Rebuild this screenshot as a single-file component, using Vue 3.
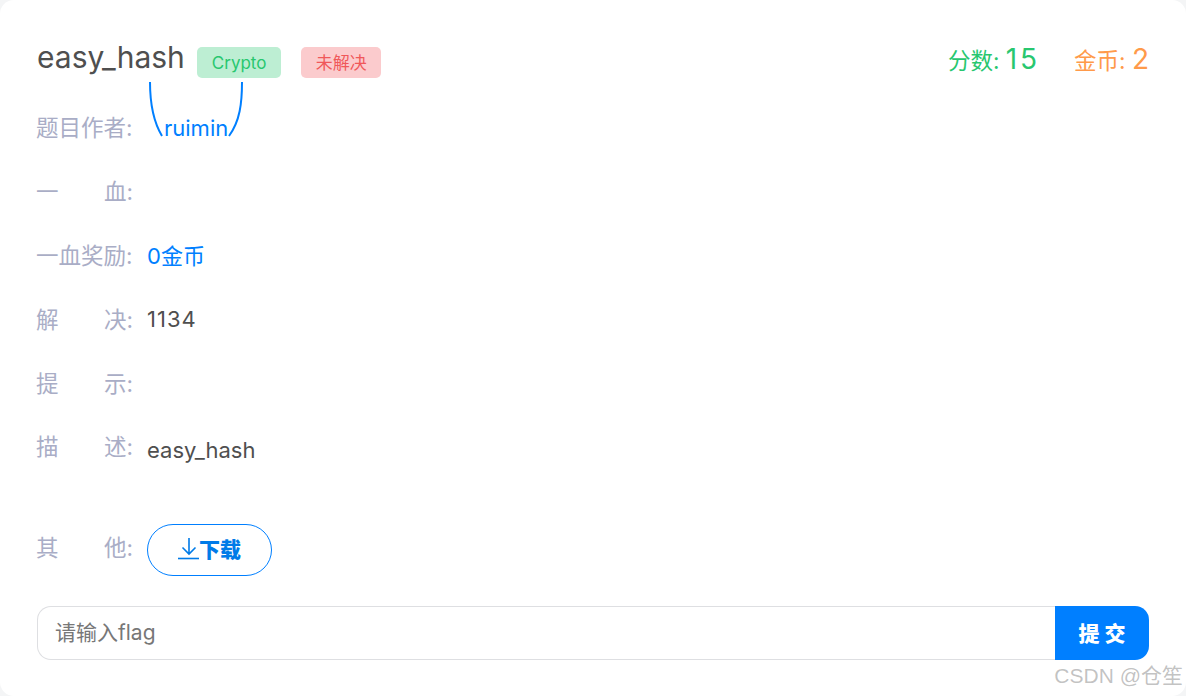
<template>
  <div class="page">
    <div class="card">
      <div class="head">
        <div class="title-wrap">
          <span class="title">easy_hash</span>
          <span class="tag tag-green">Crypto</span>
          <span class="tag tag-red">未解决</span>
        </div>
        <div class="stats">
          <span class="stat green">分数: <b class="score">15</b></span>
          <span class="stat orange">金币: <b>2</b></span>
        </div>
      </div>

      <div class="rows">
        <div class="row" v-for="row in rows" :key="row.label.join('')" :class="row.cls">
          <div class="label">
            <span v-for="part in row.label" :key="part">{{ part }}</span>
          </div>
          <div class="value" :class="row.tone">
            <span v-if="row.bracket" class="author">
              <svg class="bracket" width="102" height="60" viewBox="0 0 102 60" fill="none" stroke="#007fff" stroke-width="2">
                <path d="M6 1C6 22 9 40 18 55" />
                <path d="M98 1C98 22 96 40 85 55" />
              </svg>
              {{ row.value }}
            </span>
            <template v-else>{{ row.value }}</template>
          </div>
        </div>

        <div class="row row-other">
          <div class="label"><span>其</span><span>他:</span></div>
          <button class="download">
            <svg width="21" height="24" viewBox="0 0 21 24" fill="none" stroke="#007be8" stroke-width="1.6">
              <path d="M11 2V18M4.5 11.5L11 18L17.5 11.5" />
              <path d="M0 22.5H21" />
            </svg>
            <span>下载</span>
          </button>
        </div>
      </div>

      <div class="submit-bar">
        <input class="flag-input" placeholder="请输入flag" />
        <button class="submit">提交</button>
      </div>
    </div>
    <div class="watermark">CSDN @仓笙</div>
  </div>
</template>

<script setup>
const rows = [
  { label: ['题目作者:'], value: 'ruimin', tone: 'blue', bracket: true },
  { label: ['一', '血:'], value: '' },
  { label: ['一血奖励:'], value: '0金币', tone: 'blue' },
  { label: ['解', '决:'], value: '1134', cls: 'row-solved' },
  { label: ['提', '示:'], value: '' },
  { label: ['描', '述:'], value: 'easy_hash', cls: 'row-desc' }
]
</script>

<style>
html,
body {
  margin: 0;
  background: #f4f5f6;
}
</style>

<style scoped>
.page {
  position: relative;
  width: 1186px;
  height: 696px;
  overflow: hidden;
  font-family: Inter, "Noto Sans CJK SC", sans-serif;
}

.card {
  box-sizing: border-box;
  width: 1186px;
  height: 696px;
  padding: 36px 37px 0 37px;
  background: #fff;
  border-radius: 14px;
}

.head {
  display: flex;
  justify-content: space-between;
  align-items: flex-start;
  height: 60px;
}

.title-wrap {
  display: flex;
  align-items: flex-start;
}

.title {
  font-size: 30px;
  line-height: 42px;
  color: #4f4f4f;
  margin-right: 12px;
}

.tag {
  box-sizing: border-box;
  height: 31px;
  margin-top: 11px;
  padding: 1px 0 0 15px;
  border-radius: 5px;
  font-size: 17px;
  line-height: 30px;
  white-space: nowrap;
}

.tag-green {
  width: 84px;
  background: #bdeed3;
  color: #28c76f;
  margin-right: 20px;
}

.tag-red {
  width: 80px;
  background: #fbcbcd;
  color: #f0585a;
}

.stats {
  display: flex;
  gap: 34px;
  padding-top: 5px;
}

.stat {
  font-size: 22.5px;
  line-height: 36px;
  white-space: nowrap;
}

.stat b {
  font-size: 28px;
  font-weight: 400;
}

.score {
  letter-spacing: 3px;
}

.green {
  color: #28c76f;
}

.orange {
  color: #ff9a4a;
}

.rows {
  display: flex;
  flex-direction: column;
}

.row {
  display: flex;
  align-items: center;
  height: 64px;
}

.label {
  display: flex;
  justify-content: space-between;
  width: 97px;
  margin-left: -1px;
  margin-right: 14px;
  font-size: 22.5px;
  line-height: 32px;
  color: #a9adc6;
  white-space: nowrap;
}

.value {
  font-size: 22px;
  line-height: 32px;
  color: #4f4f4f;
}

.row-solved .value {
  letter-spacing: 1px;
  margin-bottom: 2px;
}

.blue {
  color: #007fff;
}

.author {
  position: relative;
  display: inline-block;
  padding: 0 17px;
}

.bracket {
  position: absolute;
  left: -3px;
  top: -31px;
}

.row-desc {
  height: 68px;
  align-items: flex-start;
  padding-top: 15px;
  box-sizing: border-box;
}

.row-desc .value {
  margin-top: 3px;
}

.row-other {
  height: 52px;
  margin-top: 40px;
}

.row-other .label {
  margin-top: -5px;
}

.download {
  display: flex;
  align-items: center;
  justify-content: center;
  gap: 0;
  width: 125px;
  height: 52px;
  border: 1px solid #007fff;
  border-radius: 26px;
  background: #fff;
  font-family: inherit;
  font-size: 21px;
  font-weight: 900;
  color: #007be8;
  padding: 0 0 4px;
}

.submit-bar {
  display: flex;
  width: 1112px;
  height: 54px;
  margin-top: 30px;
}

.flag-input {
  box-sizing: border-box;
  flex: 1;
  height: 54px;
  padding: 0 17px 2px;
  border: 1px solid #dedfe2;
  border-right: none;
  border-radius: 14px 0 0 14px;
  outline: none;
  font-family: inherit;
  font-size: 21px;
  color: #4f4f4f;
}

.flag-input::placeholder {
  color: #777;
  opacity: 1;
}

.submit {
  box-sizing: border-box;
  width: 94px;
  height: 54px;
  border: none;
  border-radius: 0 14px 14px 0;
  background: #007fff;
  color: #fff;
  font-family: inherit;
  font-size: 21px;
  font-weight: 900;
  letter-spacing: 5px;
  padding: 0 0 2px 5px;
}

.watermark {
  position: absolute;
  right: 3px;
  bottom: 6px;
  font-family: "Liberation Sans", "Noto Sans CJK SC", sans-serif;
  font-size: 21px;
  line-height: 28px;
  color: rgba(120, 120, 120, 0.45);
}
</style>
